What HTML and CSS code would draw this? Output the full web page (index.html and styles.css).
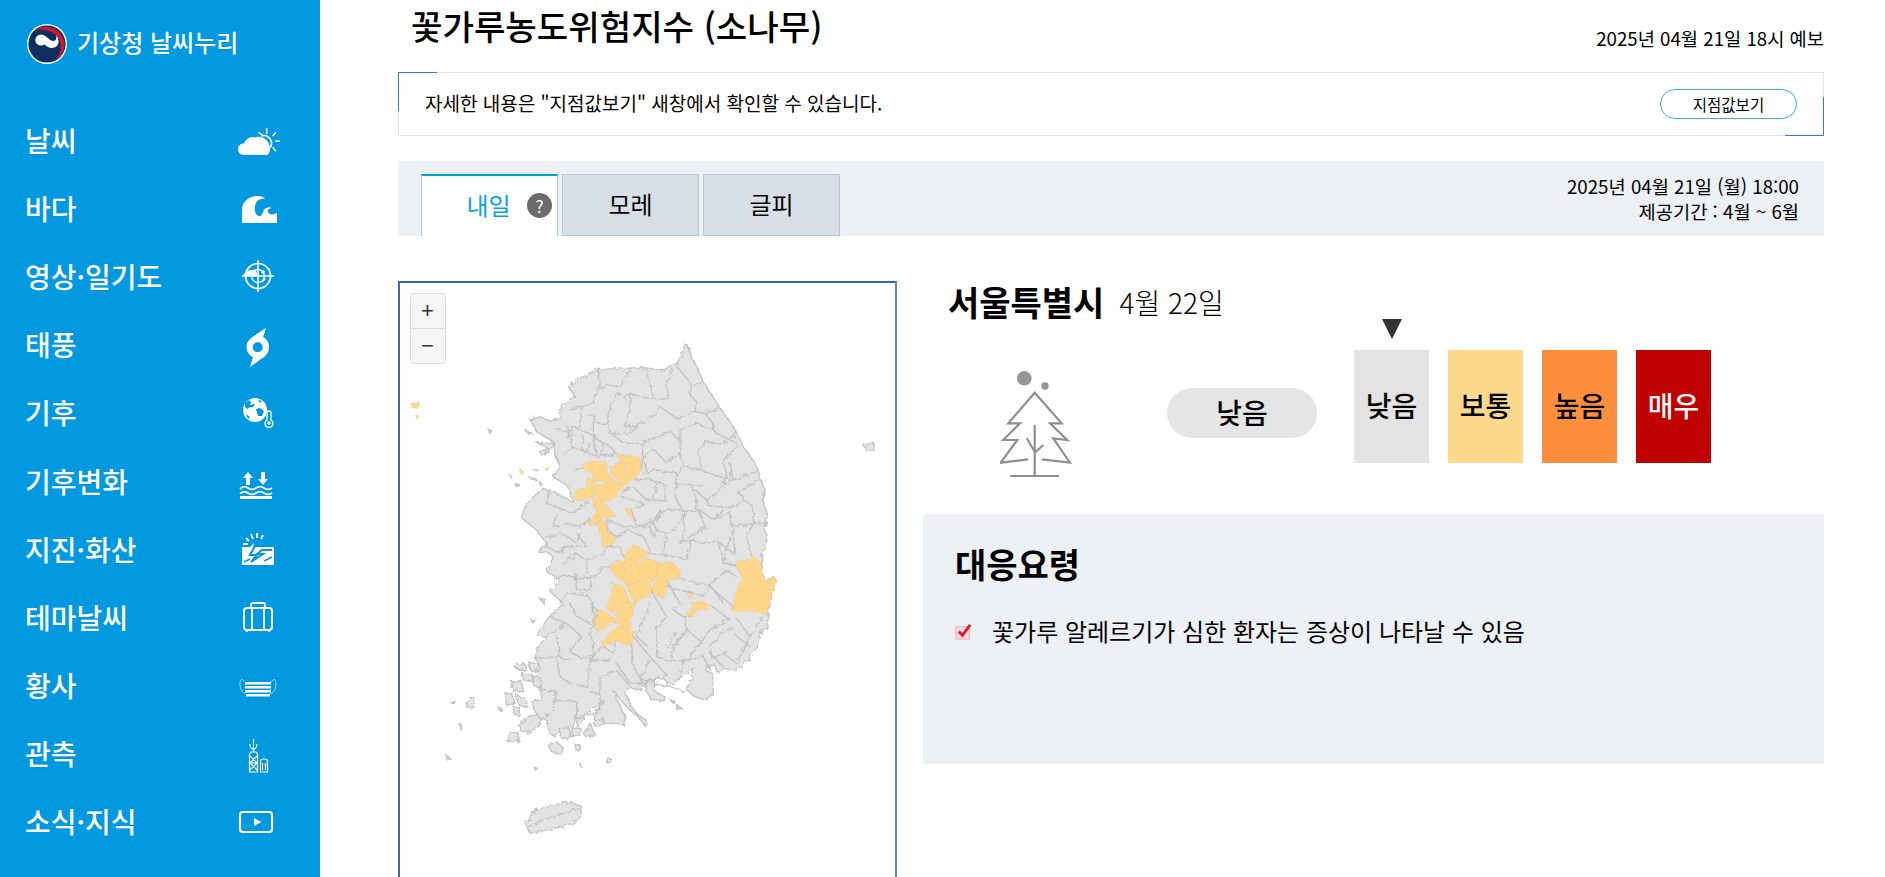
FILE: index.html
```html
<!DOCTYPE html>
<html lang="ko">
<head>
<meta charset="utf-8">
<title>꽃가루농도위험지수</title>
<link rel="stylesheet" href="styles.css">
</head>
<body>
<aside class="sidebar">
  <div class="brand">
    <svg class="brand-logo" viewBox="0 0 40 40"><circle cx="20" cy="20" r="20" fill="#fff"/><circle cx="20" cy="20" r="18.600" fill="#0f2d5e"/><path d="M9 5.500C19 -1 34 4 37 17 38.500 25 35 32 29 36 33 30 35 24 33 17 31 10 20 4 9 5.500Z" fill="#d5152f"/><circle cx="14" cy="16" r="5.500" fill="#fff"/><path d="M8.500 16C9 12 13 10 17 11.500 21 13.500 23 17 26.500 17 29 17 30 14 29 11 32.500 15 32.500 20.500 28.500 23 24 25.500 20 23 17 20 14 18 11 18.500 9 19.500Z" fill="#fff"/></svg>
    <span class="brand-name">기상청 날씨누리</span>
  </div>
  <nav class="nav">
    <a class="nav-item"><span>날씨</span><svg class="nav-icon" viewBox="0 0 44 40"><path d="M25.500 16A7.500 7.500 0 0 1 34 27.500" fill="none" stroke="#fff" stroke-width="1.700"/><path d="M22.300 12.300 27.300 15.700M30.700 8.300V14M40 12.300 36.700 16.300M44 21.300H39M40 31.300 36.700 27.300" stroke="#fff" stroke-width="1.500"/><path d="M8 35C4 35 2 32 2 29 2 25.500 5 23.500 8 23.500 10 18.500 15 16 19 17.500 23 15.500 31 18 33 24 34.500 27 34.500 35 30 35Z" fill="#fff"/></svg></a>
    <a class="nav-item"><span>바다</span><svg class="nav-icon" viewBox="0 0 44 40"><path d="M6 35V22C6 13 14 8 22 8 25 8 28 9 29 11 24 10 20 13 19 18 18 24 20 27 23 28 25 29 26 26 27 24 28 20 33 18 36 20 33 20 31 22 32 24 33 27 37 27 41 25V35Z" fill="#fff"/></svg></a>
    <a class="nav-item"><span>영상·일기도</span><svg class="nav-icon" viewBox="0 0 44 40"><circle cx="22" cy="20" r="12.500" fill="none" stroke="#fff" stroke-width="1.700"/><circle cx="22" cy="20" r="6.500" fill="none" stroke="#fff" stroke-width="1.300"/><path d="M22 4V36M6 20H38" stroke="#fff" stroke-width="1.500"/><path d="M7 19C11 14 15 13 19 14 21 16 22 18 20 21 15 21 11 20 7 19ZM26 14 29 15 28 18 25 17ZM27 22 30 23 26 27Z" fill="#fff"/></svg></a>
    <a class="nav-item"><span>태풍</span><svg class="nav-icon" viewBox="0 0 44 40"><path fill-rule="evenodd" d="M30 4C29 8 28 10 27 13 31 15 33 19 33 23 33 29 29 33 25 35 21 38 17 41 14 43 15 39 16 36 17 33.500 13 31 10.500 27 10.500 23 10.500 17 15 14 18 12 22 9 26 6 30 4ZM21.700 18.300A5 5 0 1 0 21.701 28.300 5 5 0 1 0 21.700 18.300Z" fill="#fff"/></svg></a>
    <a class="nav-item"><span>기후</span><svg class="nav-icon" viewBox="0 0 44 40"><circle cx="19" cy="18" r="12" fill="#fff"/><path d="M9 11 13 8 15 10 14 13 19 12 17 15 14 15 11 17 9 15ZM22 8 26 9 24 11ZM20 17 24 16 28 19 26 24 22 24ZM10 22 14 25 12 27Z" fill="#0099e0"/><path d="M31 21A2 2 0 0 1 35 21V28A4 4 0 1 1 31 28Z" fill="#0099e0" stroke="#fff" stroke-width="1.300"/><circle cx="33" cy="31" r="1.800" fill="#fff"/></svg></a>
    <a class="nav-item"><span>기후변화</span><svg class="nav-icon" viewBox="0 0 44 40"><path d="M12 11 17 17H14V24H10V17H7ZM25 11H29V18H32L27 24 22 18H25Z" fill="#fff"/><path d="M4 28C7 25 9 25 12 27S17 29 20 27 25 25 28 27 33 29 36 27M4 32.500C7 30 9 30 12 32S17 34 20 32 25 30 28 32 33 34 36 32" fill="none" stroke="#fff" stroke-width="1.800"/><path d="M4 35H36V38H4Z" fill="#fff"/></svg></a>
    <a class="nav-item"><span>지진·화산</span><svg class="nav-icon" viewBox="0 0 44 40"><path d="M6 18H14L18 14 17 18H38V36H6Z" fill="#fff"/><path d="M19 17 14 26H21L15 33 27 25H21L26 21H36" fill="none" stroke="#0099e0" stroke-width="2"/><path d="M8 33 14 30M28 32 36 28" stroke="#0099e0" stroke-width="1.500"/><path d="M10 9 13 12M15 5 17 10M21 4V9M27 6 25 10M7 15H12" stroke="#fff" stroke-width="1.800"/></svg></a>
    <a class="nav-item"><span>테마날씨</span><svg class="nav-icon" viewBox="0 0 44 40"><rect x="8" y="11" width="28" height="22" rx="3" fill="none" stroke="#fff" stroke-width="2"/><path d="M15 11V7.500C15 6.500 16 6 17 6H27C28 6 29 6.500 29 7.500V11M16 11V33M28 11V33M11 33V35M33 33V35" fill="none" stroke="#fff" stroke-width="1.800"/></svg></a>
    <a class="nav-item"><span>황사</span><svg class="nav-icon" viewBox="0 0 44 40"><path d="M9 17C6 13 4 14 4 19 4 25 7 28 10 29M35 17C38 13 40 14 40 19 40 25 37 28 34 29" fill="none" stroke="#fff" stroke-opacity=".6"/><path d="M9 17H35V19.500H9ZM9 21H35V23.500H9ZM9 25H35V27.500H9ZM10 29H34V31.500H10Z" fill="#fff"/></svg></a>
    <a class="nav-item"><span>관측</span><svg class="nav-icon" viewBox="0 0 44 40"><path d="M17.500 6V19M14 11C14 15 15 16 17.500 16S21 15 21 11" fill="none" stroke="#fff" stroke-width="1.100"/><path d="M13.500 39V21L15 19H20L21.500 21V39ZM14 23 21 30 14 37M21 23 14 30 21 37M14 30H21" fill="none" stroke="#fff" stroke-width="1.200"/><path d="M24.500 39V28C24.500 26.500 26.500 26 28 26S31.500 26.500 31.500 28V39ZM26.500 30V37M29.500 30V37" fill="#0099e0" stroke="#fff" stroke-width="1.200"/></svg></a>
    <a class="nav-item"><span>소식·지식</span><svg class="nav-icon" viewBox="0 0 44 40"><rect x="4" y="11" width="32" height="20" rx="3" fill="none" stroke="#fff" stroke-width="2.200"/><path d="M18 17 25.500 21 18 25Z" fill="#fff"/></svg></a>
  </nav>
</aside>
<main class="main">
  <header class="page-head">
    <h1 class="page-title">꽃가루농도위험지수 (소나무)</h1>
    <p class="page-date">2025년 04월 21일 18시 예보</p>
  </header>
  <section class="notice">
    <p class="notice-text">자세한 내용은 "지점값보기" 새창에서 확인할 수 있습니다.</p>
    <a class="notice-btn">지점값보기</a>
  </section>
  <section class="tabbar">
    <div class="tabs">
      <a class="tab tab-active"><span>내일</span><i class="tab-help">?</i></a>
      <a class="tab">모레</a>
      <a class="tab">글피</a>
    </div>
    <div class="tabbar-info">2025년 04월 21일 (월) 18:00<br>제공기간 : 4월 ~ 6월</div>
  </section>
  <section class="content">
    <div class="map">
      <svg class="map-svg" viewBox="30 39 1485 1782">
        <defs><filter id="rough" x="-5%" y="-5%" width="110%" height="110%"><feTurbulence type="fractalNoise" baseFrequency="0.07" numOctaves="3" seed="4"/><feDisplacementMap in="SourceGraphic" scale="16"/></filter></defs>
        <g filter="url(#rough)" stroke-linejoin="round" stroke-linecap="round">
          <g class="land">
            <path d="M880 220 893 225 905 260 925 300 940 335 965 375 990 415 1020 455 1045 495 1060 530 1085 565 1105 600 1112 630 1122 655 1120 695 1133 735 1125 775 1130 810 1115 860 1118 900 1125 935 1148 918 1157 930 1145 975 1135 1030 1130 1075 1108 1095 1105 1130 1085 1150 1075 1172 1050 1192 1030 1200 995 1195 985 1210 975 1185 950 1190 948 1205 968 1210 970 1270 945 1290 915 1280 890 1260 905 1225 910 1195 880 1215 850 1240 835 1240 820 1225 790 1225 770 1240 750 1258 720 1255 705 1268 728 1315 745 1335 768 1350 768 1372 745 1340 725 1325 700 1300 680 1275 672 1262 690 1310 705 1340 700 1365 650 1360 612 1350 620 1320 640 1290 600 1320 585 1340 565 1370 555 1340 545 1372 520 1375 495 1400 480 1390 470 1350 440 1340 425 1300 450 1290 455 1250 430 1230 450 1190 435 1165 445 1130 470 1100 440 1095 470 1050 520 1000 480 965 510 930 470 905 490 860 470 845 445 850 470 820 440 780 395 745 405 705 430 680 460 655 500 670 550 695 535 650 490 620 510 590 490 540 495 520 440 485 420 450 450 440 490 455 510 440 515 405 555 378 535 350 560 330 620 298 700 295 760 293 820 300 860 280 875 255Z"/>
            <path d="M405 1660 435 1620 540 1595 575 1610 570 1650 520 1670 420 1690Z"/>
            <path d="M1422 525 1450 517 1452 540 1430 543Z"/>
            <path d="M768 1232 790 1230 795 1265 825 1280 820 1292 785 1290 770 1265Z"/>
            <path d="M372 1190 400 1178 410 1195 395 1205Z"/>
            <path d="M415 1178 445 1180 450 1200 425 1205Z"/>
            <path d="M395 1210 425 1212 430 1235 400 1232Z"/>
            <path d="M430 1215 452 1225 450 1255 430 1245Z"/>
            <path d="M345 1272 365 1270 375 1300 350 1305Z"/>
            <path d="M365 1235 395 1235 400 1265 370 1265Z"/>
            <path d="M380 1275 410 1290 410 1312 385 1305Z"/>
            <path d="M370 1310 392 1315 385 1338 372 1330Z"/>
            <path d="M388 1365 415 1340 440 1330 452 1350 440 1375 410 1388 392 1385Z"/>
            <path d="M508 1380 535 1372 545 1400 515 1405Z"/>
            <path d="M545 1375 575 1375 570 1395 548 1398Z"/>
            <path d="M580 1390 600 1360 615 1395 590 1402Z"/>
            <path d="M475 1425 500 1415 520 1435 515 1450 485 1445Z"/>
            <path d="M555 1425 570 1425 570 1440 555 1440Z"/>
            <path d="M650 1465 662 1465 662 1478 650 1478Z"/>
            <path d="M362 1385 385 1390 388 1415 348 1415Z"/>
            <path d="M228 1295 250 1282 252 1312 235 1315Z"/>
            <path d="M185 1300 195 1293 192 1303Z"/>
            <path d="M208 1360 215 1365 214 1380 208 1375Z"/>
            <path d="M168 1455 180 1465 172 1470Z"/>
            <path d="M325 1312 338 1315 330 1322Z"/>
            <path d="M430 1490 442 1495 436 1500Z"/>
            <path d="M568 1483 575 1483 573 1490Z"/>
            <path d="M425 1050 438 1047 428 1058Z"/>
            <path d="M450 985 470 990 460 1000Z"/>
            <path d="M840 1290 855 1295 850 1300ZM860 1305 875 1315 860 1318ZM610 1360 640 1345 640 1365 615 1368Z"/>
            <path d="M295 480 305 480 300 490ZM405 480 428 492 420 495ZM436 515 495 522 460 558 448 545 475 535ZM430 597 445 600 440 603ZM415 620 440 628 428 628ZM450 638 456 642 450 644ZM375 640 390 645 380 650ZM360 615 366 618 360 620Z"/>
            <path class="hot" d="M62 400 90 397 82 415 68 413ZM75 438 88 435 82 447ZM385 590 405 610 395 612ZM463 592 478 592 470 605Z"/>
          </g>
          <g class="hot">
            <path d="M680 552 752 565 752 600 735 628 710 620 708 590Z"/>
            <path d="M665 590 700 575 708 620 725 630 700 650 680 625 665 615Z"/>
            <path d="M575 590 600 575 650 578 650 605 680 640 660 640 630 630 615 640 608 605 590 605Z"/>
            <path d="M620 645 690 635 695 655 665 690 630 690 615 665Z"/>
            <path d="M550 675 570 655 590 650 595 620 610 630 615 675 580 690 560 690Z"/>
            <path d="M610 680 640 695 675 735 640 745 610 765 595 762 618 735Z"/>
            <path d="M620 750 650 755 650 785 675 800 665 828 640 828 630 790Z"/>
            <path d="M710 718 722 712 732 750 715 735Z"/>
            <path d="M700 855 730 825 780 848 745 870 730 890 705 880Z"/>
            <path d="M660 890 680 870 715 880 725 905 720 945 690 930 665 905Z"/>
            <path d="M735 885 770 865 815 880 805 915 780 935 745 935 710 945 725 905Z"/>
            <path d="M805 885 845 875 870 900 870 925 840 930 820 985 785 965 800 925Z"/>
            <path d="M710 945 745 935 785 945 785 965 745 995 725 985Z"/>
            <path d="M670 940 700 950 720 995 700 1000 680 1030 650 1020 665 970Z"/>
            <path d="M700 1000 738 995 725 1045 715 1085 685 1060 680 1040Z"/>
            <path d="M622 1020 650 1030 680 1050 650 1070 620 1085 608 1050Z"/>
            <path d="M685 1065 715 1090 735 1080 725 1125 680 1115 640 1130 635 1115 665 1085Z"/>
            <path d="M905 965 915 975 905 985 895 980Z"/>
            <path d="M905 1000 935 995 960 1005 950 1020 920 1020 905 1042 885 1030 900 1020Z"/>
            <path d="M1035 885 1050 868 1072 875 1085 855 1112 880 1118 900 1125 935 1148 918 1157 930 1145 985 1130 1035 1085 1020 1025 1025 1040 960 1060 930 1045 900Z"/>
          </g>
          <path class="lines" d="M625 300 630 350 615 375 610 400 575 410 570 470 545 470M720 300 690 350 650 345 635 355M770 298 790 385 750 380 720 370 705 385M845 295 830 350 835 385 800 390M860 290 895 330 905 350 940 335M905 350 900 375 920 395 915 425 880 440 860 445 810 410 800 430M915 425 945 430 990 415M690 365 670 395 650 440 660 490M720 375 720 420 705 470 740 470 800 430M650 460 610 460 610 500 640 520 660 530M740 470 720 490 665 490 700 520 755 520M945 430 975 470 965 480 920 460 870 480 870 510 840 485 760 520 755 600M970 480 980 490 1040 520M870 480 870 550 880 590 935 600 925 545 945 515 1000 520 1040 490M1040 530 1000 570 1010 620 1000 640 1020 640 1020 580 1030 630 1100 605M870 550 830 580 790 535 760 560M755 610 800 600 860 610 880 590M860 610 855 680 880 725M735 630 775 625 825 645 825 690 770 690 730 650M935 600 1005 625M940 650 860 640M1000 650 950 690 960 710 1040 710 1060 680 1045 670 1070 650 1110 630M950 690 915 660M880 725 930 720 970 750 1020 725 1030 790 1035 850M1060 690 1090 710 1090 760 1070 800 1085 860M1030 770 1090 760 1125 760M730 650 700 660 690 680 760 700 725 720 740 770 780 760 820 720 880 720M820 720 790 760 800 780 830 790 860 770 885 730 880 790 870 820 900 800 945 770 925 720M800 780 790 800 780 770 750 770 700 770 655 750 650 780 680 800 715 780 760 800 780 840 780 850M870 820 905 810 940 820 985 815 1030 850M905 810 890 870 860 860 780 850M985 815 1000 880 1035 885M480 660 470 700 550 730 600 690M500 730 490 770 530 760 570 770 600 745M470 800 520 790 560 820 570 790M470 830 510 850 520 830 590 830 560 790M520 885 555 850 590 870 640 850 650 830 690 830 700 860M590 870 590 910M550 605 575 590M530 500 550 470 570 480 620 500M500 480 550 480 545 530 590 545 620 560M610 500 620 560 680 552M520 555 545 530M495 930 520 915 560 925 610 925 640 890 660 890M555 910 560 960 600 960 605 920M510 1000 530 970 590 975 610 1000 610 1050M470 1100 530 1060 575 1100 540 1145 575 1165 610 1155 610 1120 600 1095 622 1020M540 1170 500 1160 510 1220 540 1240 590 1250 600 1170 640 1130 670 1150 680 1115M435 1165 500 1160M445 1260 500 1265 490 1320 470 1340M500 1290 560 1295 560 1345 620 1330 640 1300M600 1265 630 1270 630 1225 680 1200 720 1250 705 1268M630 1270 630 1320M680 1180 720 1240 760 1240 730 1190 725 1125M780 1170 750 1225 790 1240M730 1100 780 1160 830 1215 790 1250M790 1250 830 1245 885 1265M830 1040 800 1070 800 1160 840 1175 850 1130 890 1080 885 1040M840 1175 890 1170 940 1160 960 1200M885 1165 870 1215M960 1150 1000 1190M960 1125 1010 1080 1030 1075M1030 1090 1080 1130M1000 1150 1040 1180 1060 1135 1080 1100 1120 1040M960 1125 965 1165 1010 1145M890 1080 935 1115 960 1080 1020 1045M935 1115 900 1160M780 1000 740 1100 775 1130M830 930 870 1000 850 1020 880 1040 905 1040M960 1005 1020 1050M870 925 920 940 960 945 1000 1000M960 950 1030 1010M960 945 1010 900 1040 920M960 945 940 980 890 965 830 950M415 1670 470 1645 570 1615M660 1170 600 1170M830 1040 785 965M540 420 575 410M530 470 545 520M590 430 615 440 610 460M580 500 575 540M600 520 590 545M640 520 630 560M660 530 680 552M760 560 770 600M800 640 790 690M900 640 920 690 915 720M1000 720 970 750M830 790 820 850M1000 880 1020 800M540 1000 560 1040 600 1060M600 1000 622 1020M480 1040 530 1060M500 1100 510 1160M860 1090 830 1130M1040 1045 1080 1100"/>
        </g>
      </svg>
      <div class="zoom">
        <a class="zoom-btn">+</a>
        <a class="zoom-btn">−</a>
      </div>
    </div>
    <div class="detail">
      <h2 class="detail-head"><strong class="detail-city">서울특별시</strong><span class="detail-date">4월 22일</span></h2>
      <div class="summary">
        <svg class="tree" viewBox="0 0 72 108"><circle cx="24.300" cy="8.300" r="7.300" fill="#969696"/><circle cx="45" cy="16" r="3.700" fill="#969696"/><path d="M28.300 89.300 .7 92.700 17.300 70H3.300L20 53.300H8.300L34.700 22.700 61.700 53.300H50L67.300 70 53.300 68.300 70 92.700 41.700 89.300M34.700 55V106M10 106H59M26.700 68.300 34.700 81.700M43.300 75 34.700 82.700" fill="none" stroke="#8f8f8f" stroke-width="2.200"/></svg>
        <div class="pill">낮음</div>
        <div class="levels">
          <div class="level"><i class="marker"></i><b class="level-box lv-low">낮음</b></div>
          <div class="level"><i class="marker marker-off"></i><b class="level-box lv-mid">보통</b></div>
          <div class="level"><i class="marker marker-off"></i><b class="level-box lv-high">높음</b></div>
          <div class="level"><i class="marker marker-off"></i><b class="level-box lv-vhigh">매우</b></div>
        </div>
      </div>
      <div class="response">
        <h3 class="response-title">대응요령</h3>
        <p class="response-item"><svg class="check" viewBox="0 0 18 18"><rect x="1" y="4" width="14" height="13" fill="#fbdde2" stroke="#f5a3b0"/><path d="M4 9 8 13 16 2" fill="none" stroke="#e8152f" stroke-width="3"/></svg>꽃가루 알레르기가 심한 환자는 증상이 나타날 수 있음</p>
      </div>
    </div>
  </section>
</main>
</body>
</html>
```
FILE: styles.css
```css
* { box-sizing: border-box; }
html, body { height: 100%; }
body {
  margin: 0;
  display: flex;
  overflow: hidden;
  background: #fff;
  color: #000;
  font-family: "Noto Sans CJK KR", "Noto Sans", sans-serif;
}
h1, h2, h3, p { margin: 0; font-weight: 400; }
.sidebar { flex: 0 0 320px; height: 100%; overflow: hidden; background: #0099e0; color: #fff; }
.brand { display: flex; align-items: center; gap: 10px; height: 87px; padding-left: 27px; }
.brand-logo { width: 40px; height: 40px; }
.brand-name { padding-bottom: 4px; font-size: 24px; font-weight: 500; }
.nav { display: flex; flex-direction: column; padding-top: 18.5px; }
.nav-item { display: flex; align-items: center; justify-content: space-between; height: 68.2px; padding: 0 40px 0 25px; font-size: 28px; font-weight: 500; }
.nav-icon { width: 44px; height: 40px; overflow: visible; }
.main { display: flex; flex-direction: column; flex: 1; min-width: 0; height: 100%; overflow: hidden; padding: 0 61px 0 78px; }
.page-head { display: flex; justify-content: space-between; flex: 0 0 72px; padding-left: 13px; }
.page-title { font-size: 34.2px; line-height: 50px; font-weight: 500; }
.page-date { font-size: 18.7px; line-height: 24px; padding-top: 26px; }
.notice { position: relative; display: flex; align-items: center; justify-content: space-between; flex: 0 0 64px; padding: 0 26px; border: 1px solid #d7e6fa; }
.notice::before { content: ""; position: absolute; left: -1px; top: -1px; width: 38px; height: 38px; border-left: 1px solid #2a7de1; border-top: 1px solid #2a7de1; }
.notice::after { content: ""; position: absolute; right: -1px; bottom: -1px; width: 38px; height: 38px; border-right: 1px solid #2a7de1; border-bottom: 1px solid #2a7de1; }
.notice-text { padding-bottom: 3px; font-size: 19px; }
.notice-btn { display: flex; align-items: center; justify-content: center; width: 137px; height: 30px; border: 1px solid #3fa9e8; border-radius: 15px; font-size: 15.5px; }
.tabbar { display: flex; justify-content: space-between; flex: 0 0 75px; margin-top: 25px; padding: 13px 25px 0 23px; background: #edf0f5; }
.tabs { display: flex; gap: 4px; }
.tab { display: flex; align-items: center; justify-content: center; width: 137px; height: 62px; padding-bottom: 4px; background: #d9dfe7; border: 1px solid #b8c4d4; font-size: 24px; }
.tab-active { position: relative; background: #fff; color: #0a9fe0; border-top: 2px solid #00a0d8; border-bottom: 0; padding-right: 2px; }
.tab-help { position: absolute; right: 5px; top: 17px; width: 25px; height: 25px; border-radius: 50%; background: #6b6b6b; color: #fff; font-style: normal; font-size: 17px; line-height: 25px; text-align: center; }
.tabbar-info { text-align: right; font-size: 18.7px; line-height: 24.5px; }
.content { display: grid; grid-template-columns: 499px 1fr; gap: 26px; flex: 1; min-height: 0; margin-top: 45px; }
.map { position: relative; min-height: 0; overflow: hidden; border: 2px solid #5f86cc; border-top-color: #3a66c0; border-left-color: #3a66c0; border-bottom: 0; background: #fff; }
.map-svg { display: block; width: 495px; height: 594px; }
.land path { fill: #e3e3e3; stroke: #c2c2c2; stroke-width: 4; }
.land .hot, .hot path { fill: #ffd68a; stroke: #e8c890; stroke-width: 2; }
.lines { fill: none; stroke: #c2c2c2; stroke-width: 4; }
.zoom { position: absolute; left: 9.500px; top: 9.500px; display: flex; flex-direction: column; width: 36px; height: 71px; border: 1px solid #dcdcdc; border-radius: 4px; background: #f6f6f6; }
.zoom-btn { display: flex; align-items: center; justify-content: center; flex: 1; font-size: 22px; color: #333; font-family: "Liberation Sans", sans-serif; }
.zoom-btn + .zoom-btn { border-top: 1px solid #dcdcdc; }
.detail { min-height: 0; }
.detail-head { display: flex; align-items: center; gap: 15px; height: 38px; padding: 4px 0 0 25px; line-height: 40px; }
.detail-city { font-size: 34px; font-weight: 700; }
.detail-date { font-size: 28px; font-weight: 300; }
.summary { display: flex; align-items: flex-start; height: 160px; padding-left: 77px; }
.tree { width: 72px; height: 108px; margin-top: 51px; }
.pill { width: 150px; height: 50px; margin: 69px 0 0 95px; border-radius: 25px; background: #e5e5e5; font-size: 28px; font-weight: 500; line-height: 48px; text-align: center; }
.levels { display: flex; gap: 19px; margin-left: 37px; }
.level { display: flex; flex-direction: column; align-items: center; width: 75px; }
.marker { width: 0; height: 0; margin-bottom: 11px; border-top: 20px solid #333; border-left: 10px solid transparent; border-right: 10px solid transparent; }
.marker-off { border-top-color: transparent; }
.level-box { display: block; width: 75px; height: 113px; font-size: 28px; font-weight: 500; line-height: 111px; text-align: center; }
.lv-low { background: #e3e3e3; }
.lv-mid { background: #fbd88b; }
.lv-high { background: #ff8f3c; }
.lv-vhigh { background: #c00000; color: #fff; }
.response { height: 250px; margin-top: 35px; padding: 26px 32px; background: #edf0f5; }
.response-title { font-size: 34px; font-weight: 700; line-height: 48px; }
.response-item { display: flex; align-items: center; gap: 20px; margin-top: 25px; font-size: 24px; line-height: 36px; }
.check { width: 17px; height: 17px; }
```
